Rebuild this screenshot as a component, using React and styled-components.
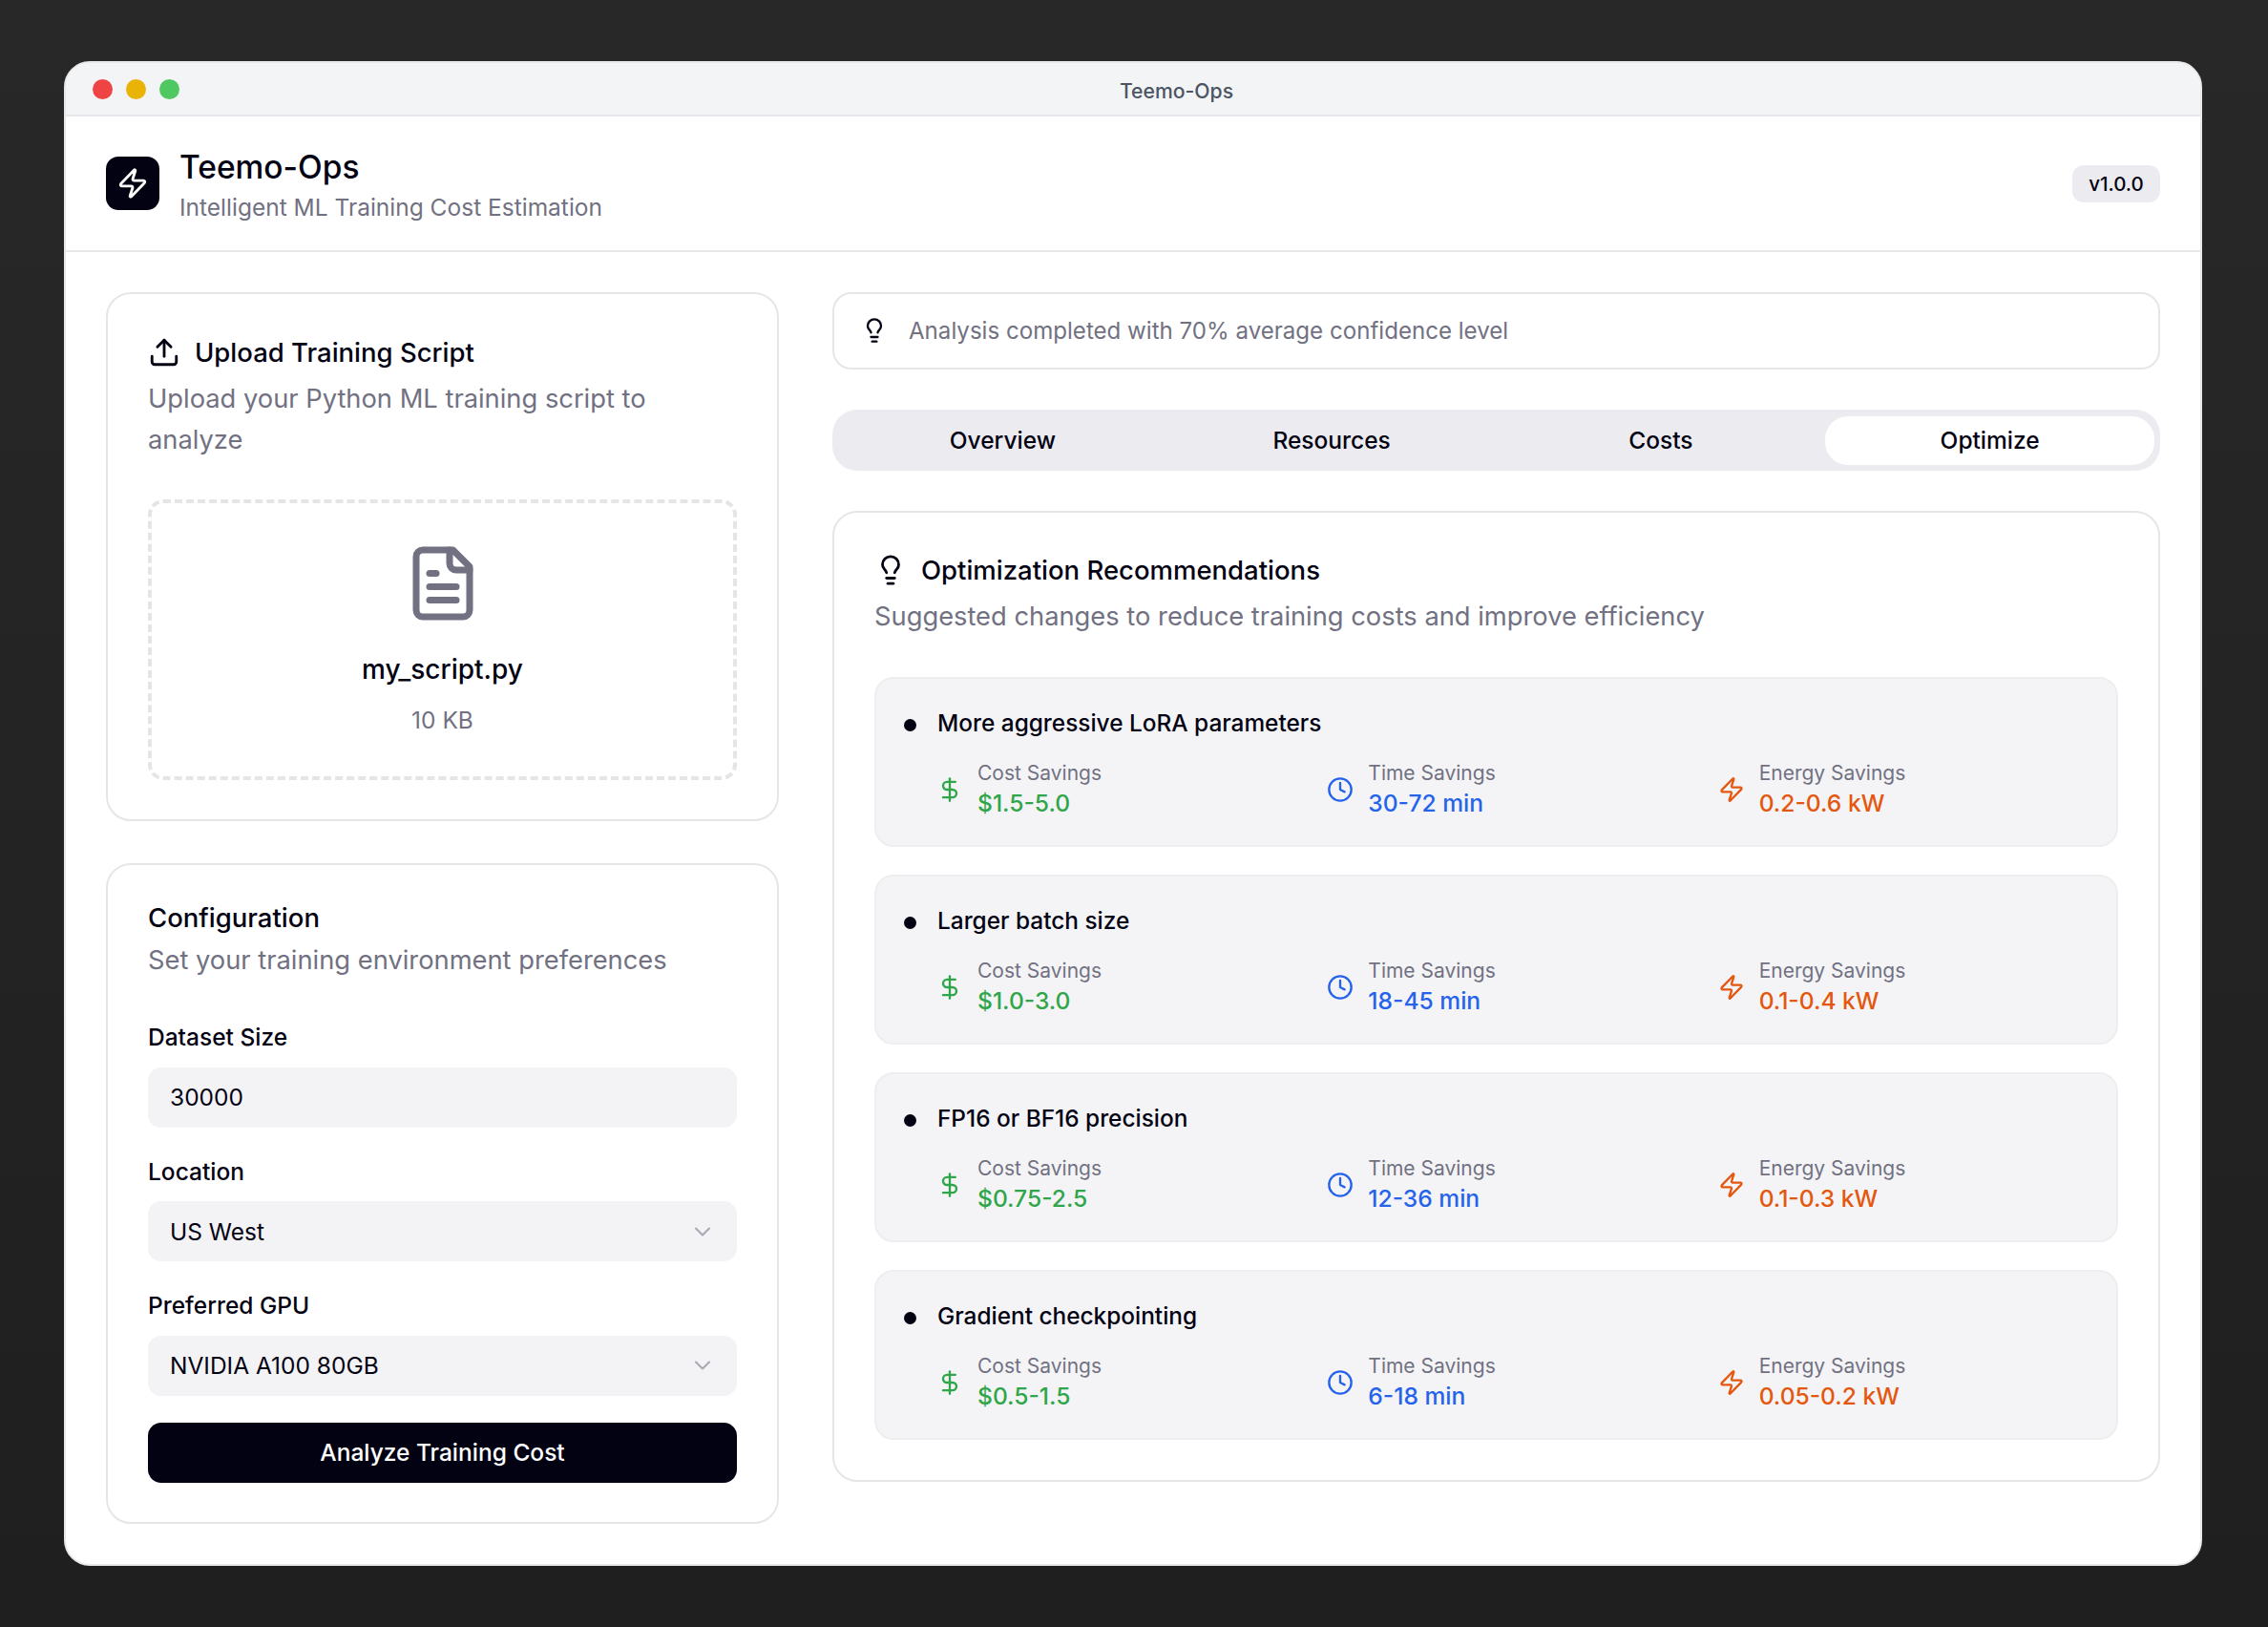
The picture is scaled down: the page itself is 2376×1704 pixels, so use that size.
import styled, { createGlobalStyle } from "styled-components";
import {
  ChevronDown,
  Clock,
  DollarSign,
  Lightbulb,
  Upload,
  Zap,
} from "lucide-react";

const GlobalStyle = createGlobalStyle`
  * {
    box-sizing: border-box;
  }
  body {
    margin: 0;
    background: linear-gradient(#282828, #1f1f1f);
    font-family: Inter, "Liberation Sans", sans-serif;
    color: #030213;
  }
`;

const Page = styled.div`
  width: 2376px;
  height: 1704px;
  padding: 64px 69px 64px 67px;
`;

const Window = styled.div`
  height: 1576px;
  display: flex;
  flex-direction: column;
  background: #fff;
  border: 2px solid #e8e8ea;
  border-radius: 27px;
  overflow: hidden;
`;

const TitleBar = styled.div`
  height: 56px;
  flex: none;
  display: flex;
  align-items: center;
  padding: 0 28px;
  background: #f3f4f6;
  border-bottom: 2px solid #e5e7eb;
`;

const Dots = styled.div`
  display: flex;
  gap: 14px;
`;

const Dot = styled.span`
  width: 21px;
  height: 21px;
  border-radius: 50%;
  background: ${(p) => p.color};
`;

const WindowTitle = styled.div`
  flex: 1;
  text-align: center;
  font-size: 21.2px;
  font-weight: 500;
  color: #4b5563;
  padding-top: 4px;
`;

const Header = styled.header`
  height: 142px;
  flex: none;
  display: flex;
  align-items: center;
  justify-content: space-between;
  padding: 0 42px;
  border-bottom: 2px solid #e7e7e9;
`;

const Brand = styled.div`
  display: flex;
  align-items: center;
  gap: 21px;
`;

const LogoBox = styled.div`
  width: 56px;
  height: 56px;
  border-radius: 13px;
  background: #030213;
  color: #fff;
  display: flex;
  align-items: center;
  justify-content: center;
`;

const BrandText = styled.div`
  margin-top: 4px;
`;

const AppName = styled.h1`
  margin: 0;
  font-size: 33.5px;
  line-height: 44px;
  font-weight: 500;
`;

const Tagline = styled.p`
  margin: 2px 0 0;
  font-size: 24.5px;
  line-height: 36px;
  color: #717182;
`;

const Badge = styled.span`
  width: 92px;
  height: 39px;
  display: flex;
  align-items: center;
  justify-content: center;
  background: #ececf0;
  border-radius: 12px;
  font-size: 20.5px;
  font-weight: 500;
`;

const Main = styled.main`
  flex: 1;
  display: grid;
  grid-template-columns: 705px 1fr;
  gap: 56px;
  padding: 42px;
`;

const Column = styled.div`
  display: flex;
  flex-direction: column;
  gap: ${(p) => p.$gap}px;
`;

const Card = styled.section`
  border: 2px solid #e6e6e6;
  border-radius: 26px;
  padding: ${(p) => p.$top}px 42px ${(p) => p.$bottom || 41}px;
`;

const CardTitle = styled.h2`
  margin: 0;
  display: flex;
  align-items: center;
  gap: 15px;
  font-size: 27.5px;
  line-height: 40px;
  font-weight: 500;
`;

const CardText = styled.p`
  margin: ${(p) => p.$top || 7}px 0 0;
  font-size: 27.3px;
  line-height: ${(p) => p.$line || 43}px;
  color: #717182;
`;

const DropZone = styled.div`
  margin-top: 41px;
  height: 294px;
  display: flex;
  flex-direction: column;
  align-items: center;
  justify-content: center;
  border: 4px dashed #e5e5e5;
  border-radius: 16px;
  color: #717182;
`;

const FileName = styled.div`
  margin-top: 28px;
  font-size: 28px;
  line-height: 40px;
  font-weight: 500;
  color: #030213;
`;

const FileSize = styled.div`
  margin-top: 15px;
  font-size: 24.5px;
  line-height: 36px;
`;

const FieldLabel = styled.label`
  display: block;
  margin-top: ${(p) => p.$top || 28}px;
  margin-bottom: 13.5px;
  font-size: 24.5px;
  line-height: 36px;
  font-weight: 500;
`;

const TextInput = styled.input`
  display: block;
  width: 100%;
  height: 63px;
  padding: 0 23px;
  border: 0;
  border-radius: 14px;
  background: #f3f3f5;
  font: 400 24.5px Inter, "Liberation Sans", sans-serif;
  color: #030213;
`;

const SelectBox = styled.button`
  width: 100%;
  height: 63px;
  display: flex;
  align-items: center;
  justify-content: space-between;
  padding: 0 22px 0 23px;
  border: 0;
  border-radius: 14px;
  background: #f3f3f5;
  font: 400 24.5px Inter, "Liberation Sans", sans-serif;
  color: #030213;
  svg {
    color: #a9a9b4;
  }
`;

const SubmitButton = styled.button`
  display: block;
  width: 100%;
  height: 63px;
  margin-top: 28px;
  border: 0;
  border-radius: 14px;
  background: #030213;
  color: #fff;
  font: 500 24.5px Inter, "Liberation Sans", sans-serif;
`;

const Notice = styled.div`
  height: 80.5px;
  display: flex;
  align-items: center;
  gap: 22px;
  padding-left: 28px;
  border: 2px solid #e6e6e6;
  border-radius: 20px;
  font-size: 24.1px;
  color: #717182;
  svg {
    color: #030213;
  }
`;

const TabList = styled.div`
  height: 64px;
  display: grid;
  grid-template-columns: repeat(4, 1fr);
  padding: 7px 6px 6px;
  background: #ececf0;
  border-radius: 26px;
`;

const Tab = styled.div`
  display: flex;
  align-items: center;
  justify-content: center;
  border-radius: 24px;
  background: ${(p) => (p.$active ? "#fff" : "transparent")};
  font-size: 24.5px;
  font-weight: 500;
`;

const SavingsList = styled.div`
  margin-top: 43.5px;
  display: flex;
  flex-direction: column;
  gap: 29px;
`;

const SavingsCard = styled.article`
  height: 178px;
  padding: 28px 29px 0;
  background: #f4f4f6;
  border: 2px solid #eeeef0;
  border-radius: 20px;
`;

const SavingsTitle = styled.h3`
  margin: 0;
  display: flex;
  align-items: center;
  gap: 22px;
  font-size: 24.4px;
  line-height: 36px;
  font-weight: 500;
  &::before {
    content: "";
    width: 13px;
    height: 13px;
    margin-top: 4px;
    border-radius: 50%;
    background: #030213;
  }
`;

const Metrics = styled.div`
  margin: 20px 0 0 34px;
  display: grid;
  grid-template-columns: repeat(3, 1fr);
  gap: 21px;
`;

const Metric = styled.div`
  display: flex;
  align-items: center;
  gap: 15px;
  color: ${(p) => p.color};
`;

const MetricLabel = styled.div`
  font-size: 21px;
  line-height: 30px;
  color: #717182;
`;

const MetricValue = styled.div`
  font-size: 24.6px;
  line-height: 33px;
  font-weight: 500;
`;

function FileIcon() {
  return (
    <svg
      width="84"
      height="84"
      viewBox="0 0 24 24"
      fill="none"
      stroke="currentColor"
      strokeWidth="2"
      strokeLinecap="round"
      strokeLinejoin="round"
    >
      <path d="M15 2H6a2 2 0 0 0-2 2v16a2 2 0 0 0 2 2h12a2 2 0 0 0 2-2V7Z" />
      <path d="M14 2v4a2 2 0 0 0 2 2h4" />
      <path d="M10 9H8" />
      <path d="M16 13H8" />
      <path d="M16 17H8" />
    </svg>
  );
}

const recommendations = [
  { title: "More aggressive LoRA parameters", cost: "$1.5-5.0", time: "30-72 min", energy: "0.2-0.6 kW" },
  { title: "Larger batch size", cost: "$1.0-3.0", time: "18-45 min", energy: "0.1-0.4 kW" },
  { title: "FP16 or BF16 precision", cost: "$0.75-2.5", time: "12-36 min", energy: "0.1-0.3 kW" },
  { title: "Gradient checkpointing", cost: "$0.5-1.5", time: "6-18 min", energy: "0.05-0.2 kW" },
];

export default function App() {
  return (
    <Page>
      <GlobalStyle />
      <Window>
        <TitleBar>
          <Dots>
            <Dot color="#ef4444" />
            <Dot color="#eab308" />
            <Dot color="#4fc862" />
          </Dots>
          <WindowTitle>Teemo-Ops</WindowTitle>
        </TitleBar>

        <Header>
          <Brand>
            <LogoBox>
              <Zap size={34} strokeWidth={2} />
            </LogoBox>
            <BrandText>
              <AppName>Teemo-Ops</AppName>
              <Tagline>Intelligent ML Training Cost Estimation</Tagline>
            </BrandText>
          </Brand>
          <Badge>v1.0.0</Badge>
        </Header>

        <Main>
          <Column $gap={44}>
            <Card $top={41}>
              <CardTitle>
                <Upload size={34} />
                Upload Training Script
              </CardTitle>
              <CardText>Upload your Python ML training script to analyze</CardText>
              <DropZone>
                <FileIcon />
                <FileName>my_script.py</FileName>
                <FileSize>10 KB</FileSize>
              </DropZone>
            </Card>

            <Card $top={35}>
              <CardTitle>Configuration</CardTitle>
              <CardText $top={5} $line={40}>
                Set your training environment preferences
              </CardText>
              <FieldLabel $top={42}>Dataset Size</FieldLabel>
              <TextInput defaultValue="30000" />
              <FieldLabel>Location</FieldLabel>
              <SelectBox>
                US West
                <ChevronDown size={28} strokeWidth={1.8} />
              </SelectBox>
              <FieldLabel>Preferred GPU</FieldLabel>
              <SelectBox>
                NVIDIA A100 80GB
                <ChevronDown size={28} strokeWidth={1.8} />
              </SelectBox>
              <SubmitButton>Analyze Training Cost</SubmitButton>
            </Card>
          </Column>

          <Column $gap={42}>
            <Notice>
              <Lightbulb size={28} />
              Analysis completed with 70% average confidence level
            </Notice>

            <TabList>
              <Tab>Overview</Tab>
              <Tab>Resources</Tab>
              <Tab>Costs</Tab>
              <Tab $active>Optimize</Tab>
            </TabList>

            <Card $top={40} $bottom={42}>
              <CardTitle>
                <Lightbulb size={34} />
                Optimization Recommendations
              </CardTitle>
              <CardText $top={9} $line={40}>
                Suggested changes to reduce training costs and improve efficiency
              </CardText>
              <SavingsList>
                {recommendations.map((item) => (
                  <SavingsCard key={item.title}>
                    <SavingsTitle>{item.title}</SavingsTitle>
                    <Metrics>
                      <Metric color="#30a64a">
                        <DollarSign size={28} />
                        <div>
                          <MetricLabel>Cost Savings</MetricLabel>
                          <MetricValue>{item.cost}</MetricValue>
                        </div>
                      </Metric>
                      <Metric color="#2563eb">
                        <Clock size={28} />
                        <div>
                          <MetricLabel>Time Savings</MetricLabel>
                          <MetricValue>{item.time}</MetricValue>
                        </div>
                      </Metric>
                      <Metric color="#e4570f">
                        <Zap size={28} />
                        <div>
                          <MetricLabel>Energy Savings</MetricLabel>
                          <MetricValue>{item.energy}</MetricValue>
                        </div>
                      </Metric>
                    </Metrics>
                  </SavingsCard>
                ))}
              </SavingsList>
            </Card>
          </Column>
        </Main>
      </Window>
    </Page>
  );
}
